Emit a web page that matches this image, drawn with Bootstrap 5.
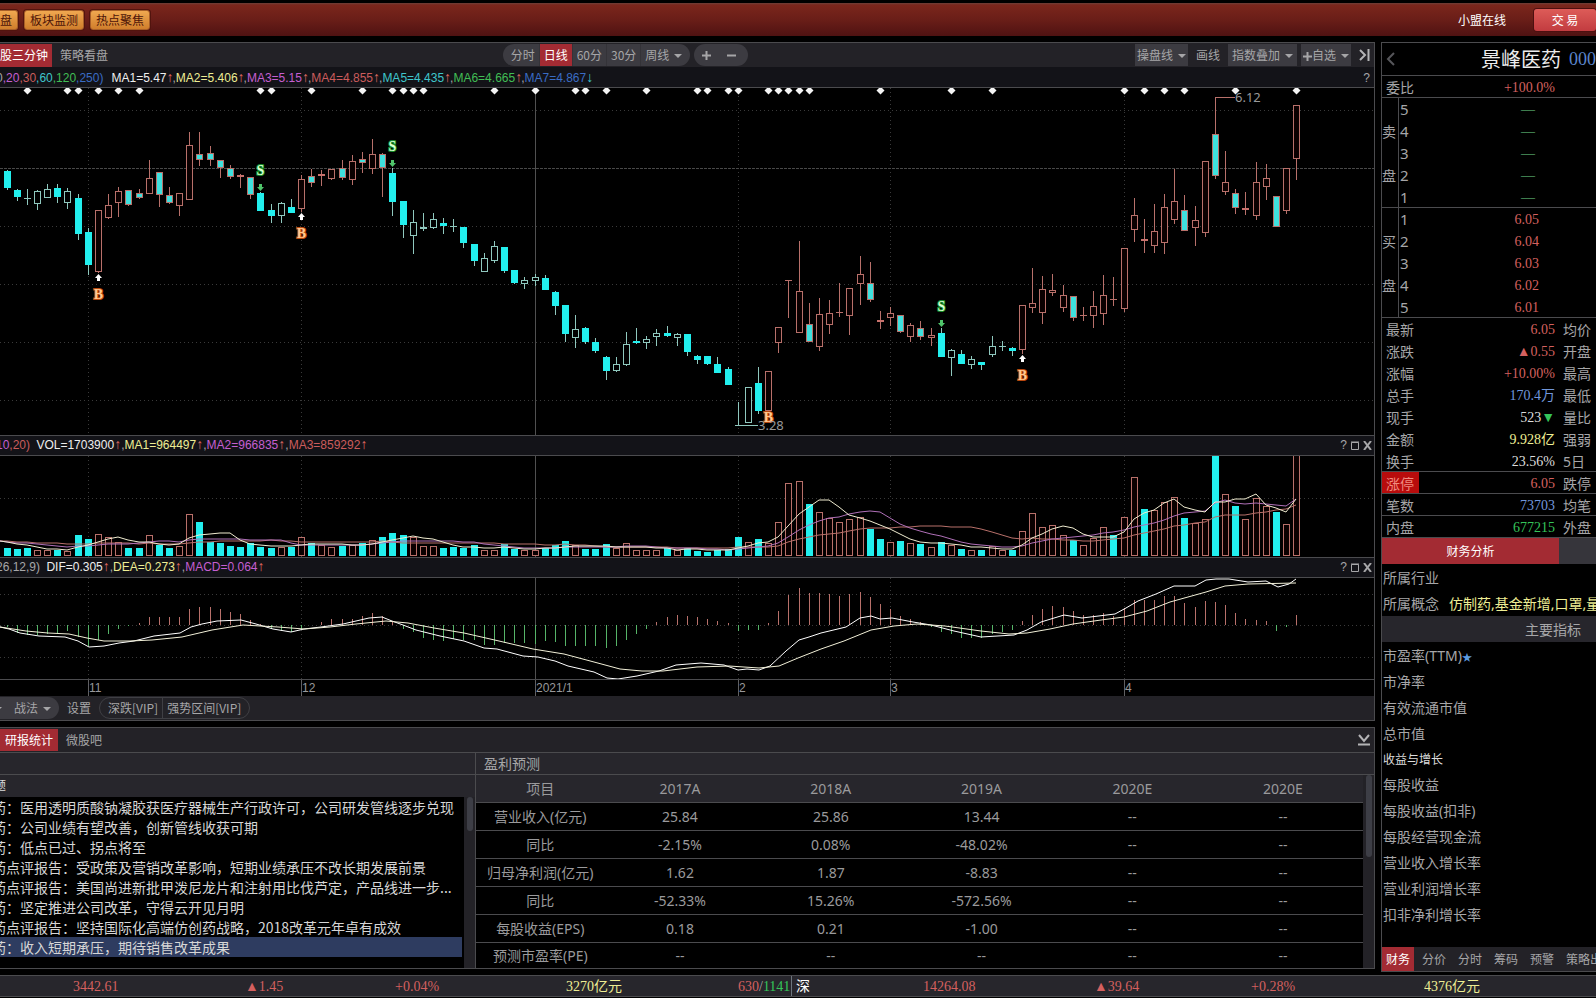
<!DOCTYPE html>
<html lang="zh-CN">
<head>
<meta charset="utf-8">
<meta name="viewport" content="width=device-width, initial-scale=1">
<title>景峰医药 - 日线</title>
<link href="https://cdn.jsdelivr.net/npm/bootstrap@5.3.0/dist/css/bootstrap.min.css" rel="stylesheet">
<style>
:root{--line:#4b4b4e;--panel:#232227;--panel2:#27262c;--strip:#131318;--tabred:#a32b33;--txt:#a6a6a8;--up:#d4605f;--dn:#35c45a;--blue:#7197dc;--yel:#eeee94}
body{background:#000;color:var(--txt);font:12px/20px "Noto Sans","Noto Sans CJK SC",sans-serif;overflow-x:hidden}
button{font:inherit;color:inherit;border:0;background:none;padding:0;white-space:nowrap}
table{border-collapse:separate;border-spacing:0}
th{font-weight:400}
.cjk{font-family:"Noto Sans CJK SC",sans-serif}
.topbar{height:36px;border-top:3px solid #000;background:linear-gradient(#6e4038 0,#7b261c 2px,#6a1e18 50%,#4f1212)}
.quick{gap:6px}
.btn-gold{height:20px;padding:0 5px;border-radius:3px;border:1px solid #a85f28;background:linear-gradient(#f0a850,#d07e2c);color:#4e1508;line-height:18px;box-shadow:0 0 0 1px #52140e}
.btn-trade{width:62px;height:22px;border-radius:3px;background:linear-gradient(#dd5c58,#c23c40);color:#fff;box-shadow:0 0 0 1px #4c1010}
.work{margin-top:6px}
.left-side{min-width:0;margin:0 6px 3px 0}
.panel-box{border:1px solid var(--line);border-left:0}
.tools{background:var(--panel);height:24px}
.tab-on{background:var(--tabred);color:#fff}
.pill{background:#3c3b41;border-radius:11px;height:22px;overflow:hidden}
.pill button{height:22px}
.pill button+button{border-left:1px solid #343338}
.boxbtn{background:#3c3b41;height:22px;padding:0 2px}
.dropdown-toggle::after{border-width:4px;border-bottom:0;vertical-align:2px;margin-left:5px}
.strip{background:var(--strip);height:21px;border-bottom:1px solid var(--line);font:12px/19px "Liberation Sans",sans-serif;white-space:pre;padding-right:4px}
.strip.first{line-height:22px}
.strip.mid{border-top:1px solid var(--line);padding-right:2px}
.strip>span:first-child{margin-left:-4px}
.c-w{color:#eee}.c-y{color:var(--yel)}.c-m{color:#c55fd0}.c-r{color:#cb5c5c}.c-c{color:#3fc6cc}.c-g{color:#41be55}.c-b{color:#3a6cc4}.c-u{color:#e06c62}
.arr{font-weight:700;font-size:14px;line-height:1px;margin-right:-1px}
.strip.mid .arr{margin-right:0}
.up{color:var(--up)}.dn{color:var(--dn)}.blue{color:var(--blue)}.yel{color:var(--yel)}.lt{color:#dcdcdc}
svg{display:block}
.pane{width:100%;overflow:hidden}
.axis{border-top:1px solid var(--line)}
.axis text{font:12px "Liberation Sans",sans-serif;fill:#98989a}
.lvl{font:13px "Noto Sans",sans-serif;fill:#98989a}
.sig{font:bold 14px "Liberation Serif",serif;text-anchor:middle;paint-order:stroke;stroke-width:2px}
.sig-s{fill:#d9ffd0;stroke:#168a2a}
.sig-b{fill:#ffc890;stroke:#b8480e}
.footbar{height:24px;background:var(--panel)}
.half{background:#3c3b41;border-radius:0 11px 11px 0;height:22px}
.half button:first-child{margin-left:-6px}
.ring{border:1px solid #3f3f44;border-radius:11px;height:22px;line-height:18px}
.ring button+button{border-left:1px solid #3f3f44}
.headline{background:var(--panel2);height:22px}
.ruled{border-bottom:1px solid var(--line)}
.news{flex:0 0 475px;min-width:0}
.news-list{font-size:14px;list-style:none;margin:0;padding:0 0 11px;width:462px}
.news-list a{display:block;height:20px;color:#d6d6d6;text-decoration:none;text-indent:-8px;white-space:nowrap;overflow:hidden}
.news-list .picked a{background:#2e3c60}
.track{width:11px;background:var(--panel)}
.thumb{width:6px;border-radius:3px;background:#3d3e46}
.forecast{border-left:1px solid var(--line);min-width:0}
.fc{table-layout:fixed;width:100%;font-size:14px;text-align:center;color:#9a9a9c}
.fc th,.fc td{height:28px;padding:0;border-bottom:1px solid var(--line);line-height:20px;white-space:nowrap}
.fc tr>:last-child{padding-right:5px}
.fc thead th{background:var(--panel2)}
.fc tbody tr:last-child>*{height:25px;border-bottom:0}
.quote{flex:0 0 215px;border-top:1px solid var(--line);border-left:1px solid var(--line);border-bottom:1px solid var(--line);overflow:hidden;font-size:14px;white-space:nowrap}
.stock{height:33px;padding-left:99px;font-size:20px;line-height:32px;color:#ececec}
.num{font-family:"Liberation Serif","Noto Sans CJK SC",serif;font-size:14px}
.code{font-family:"Liberation Serif",serif;font-size:18px;color:#5c86cc}
.quote table{width:100%;table-layout:fixed;line-height:18px}
.quote td,.quote th{height:22px;padding:0;overflow:hidden}
.depth tr:last-child>*{border-bottom:1px solid var(--line)}
.depth th{border-right:1px solid var(--line)}
.quote .depth th,.quote td.num{padding-top:2px}
.quote .depth .lv{font-size:15px;padding-left:1px}
.quote .depth .price{text-align:right;padding-right:57px}
.quote .depth .dn{padding-right:61px;color:#6fd38a}
.quote .kv .val{text-align:right;padding-right:4px}
.quote .kv th{padding-top:2px}
.quote .kv th:first-child{padding-left:4px}
.quote .kv th:last-child{padding-left:4px}
.kv tr.cut>*{border-bottom:1px solid var(--line)}
.kv th.limit{background:#b80c0c;color:#f08c80}
.fin{height:26px;line-height:26px;padding:1px 0 0 1px;flex-shrink:0}
.fin.sub{font-size:12px;height:25px}
.fin.mid{background:var(--panel2);padding-left:143px}
.seg{height:26px;font-size:12px;background:#36353b}
.seg button{width:177px}
.side-tabs{font-size:12px;background:var(--panel)}
.side-tabs button{height:24px}
.status{height:22px;margin-top:3px;background:var(--panel2);border-top:1px solid var(--line);border-bottom:1px solid var(--line);display:grid;grid-template-columns:172fr 150fr 171fr 172fr 53fr 132fr 171fr 157fr 173fr 172fr;padding-left:73px;line-height:21px;white-space:nowrap}
.status>*{min-width:0;overflow:hidden}
</style>
</head>
<body>
<header class="topbar d-flex align-items-center cjk">
  <nav class="d-flex quick flex-grow-1">
    <button class="btn-gold ps-0 rounded-start-0 border-start-0">盘</button>
    <button class="btn-gold">板块监测</button>
    <button class="btn-gold">热点聚焦</button>
  </nav>
  <a href="#" class="text-white text-decoration-none me-4">小盟在线</a>
  <button class="btn-trade ms-1">交 易</button>
</header>

<div class="d-flex work">
<main class="left-side flex-grow-1 d-flex flex-column">
  <section class="panel-box">
    <div class="tools d-flex align-items-center justify-content-between cjk">
      <div class="d-flex align-items-center pe-2">
        <button class="tab-on pe-1" style="height:23px">股三分钟</button>
        <button class="ms-2">策略看盘</button>
      </div>
      <div class="d-flex gap-1 align-items-center">
        <div class="pill d-flex">
          <button class="ps-2 pe-1">分时</button>
          <button class="tab-on px-1">日线</button>
          <button class="px-1">60分</button>
          <button class="px-1">30分</button>
          <button class="ps-1 pe-2 dropdown-toggle">周线</button>
        </div>
        <div class="pill d-flex px-1 gap-1 align-items-center">
          <button class="px-1" aria-label="放大"><svg width="9" height="9"><path d="M4.5 0v9M0 4.5h9" stroke="#a6a6a8" stroke-width="2"/></svg></button>
          <button class="px-2 border-0" aria-label="缩小"><svg width="9" height="9"><path d="M0 4.5h9" stroke="#a6a6a8" stroke-width="2"/></svg></button>
        </div>
      </div>
      <div class="d-flex align-items-center gap-1">
        <button class="boxbtn dropdown-toggle">操盘线</button>
        <button class="px-1">画线</button>
        <button class="boxbtn px-1 dropdown-toggle">指数叠加</button>
        <button class="boxbtn dropdown-toggle"><svg class="d-inline" width="9" height="9"><path d="M4.5 0v9M0 4.5h9" stroke="#a6a6a8" stroke-width="2"/></svg>自选</button>
        <button class="px-1" aria-label="展开"><svg width="11" height="12"><path d="M1 1l5 5-5 5M9.500 0v12" fill="none" stroke="#b4b4b6" stroke-width="2"/></svg></button>
      </div>
    </div>
    <div class="strip first d-flex justify-content-between"><span>0<span class="c-m">,20</span><span class="c-r">,30</span><span class="c-c">,60</span><span class="c-g">,120</span><span class="c-b">,250)</span><span class="ms-2 c-w">MA1=5.47</span><span class="arr c-u">↑</span>,<span class="c-y">MA2=5.406</span><span class="arr c-u">↑</span>,<span class="c-m">MA3=5.15</span><span class="arr c-u">↑</span>,<span class="c-r">MA4=4.855</span><span class="arr c-u">↑</span>,<span class="c-c">MA5=4.435</span><span class="arr c-u">↑</span>,<span class="c-g">MA6=4.665</span><span class="arr c-u">↑</span>,<span class="c-b">MA7=4.867</span><span class="arr c-c">↓</span></span><button>?</button></div>
    <svg class="pane" id="k" height="347"></svg>
    <div class="strip mid d-flex justify-content-between"><span><span class="c-m">10</span><span class="c-r">,20)</span> <span class="c-w" style="margin-left:3px">VOL=1703900</span><span class="arr c-u">↑</span>,<span class="c-y">MA1=964497</span><span class="arr c-u">↑</span>,<span class="c-m">MA2=966835</span><span class="arr c-u">↑</span>,<span class="c-r">MA3=859292</span><span class="arr c-u">↑</span></span><span class="d-flex gap-1 align-items-center"><button>?</button><button aria-label="最大化"><svg width="8" height="9"><path d="M.5 1.500h7v7h-7zM0 1h8" fill="none" stroke="#a6a6a8"/></svg></button><button aria-label="关闭"><svg width="9" height="9"><path d="M1 0l7 9M8 0l-7 9" stroke="#a6a6a8" stroke-width="2"/></svg></button></span></div>
    <svg class="pane" id="v" height="101"></svg>
    <div class="strip mid d-flex justify-content-between"><span>26,12,9) <span class="c-w" style="margin-left:3px">DIF=0.305</span><span class="arr c-u">↑</span>,<span class="c-y">DEA=0.273</span><span class="arr c-u">↑</span>,<span class="c-m">MACD=0.064</span><span class="arr c-u">↑</span></span><span class="d-flex gap-1 align-items-center"><button>?</button><button aria-label="最大化"><svg width="8" height="9"><path d="M.5 1.500h7v7h-7zM0 1h8" fill="none" stroke="#a6a6a8"/></svg></button><button aria-label="关闭"><svg width="9" height="9"><path d="M1 0l7 9M8 0l-7 9" stroke="#a6a6a8" stroke-width="2"/></svg></button></span></div>
    <svg class="pane" id="m" height="101"></svg>
    <svg class="pane axis" id="a" height="17"></svg>
    <div class="footbar d-flex align-items-center cjk">
      <div class="half d-flex align-items-center pe-2"><button class="dropdown-toggle" aria-label="更多"></button><button class="ms-2 ps-1 dropdown-toggle">战法</button></div>
      <button class="mx-2">设置</button>
      <div class="ring d-flex px-2"><button class="pe-1">深跌[VIP]</button><button class="ps-1">强势区间[VIP]</button></div>
    </div>
  </section>

  <section class="panel-box work">
    <div class="tools ruled d-flex align-items-center cjk" style="height:25px">
      <button class="tab-on px-1" style="height:22px;width:58px">研报统计</button>
      <button class="ms-2">微股吧</button>
      <button class="ms-auto me-1" aria-label="收起"><svg width="12" height="12"><path d="M1 1l5 6 5-6M0 10.500h12" fill="none" stroke="#b4b4b6" stroke-width="2"/></svg></button>
    </div>
    <div class="d-flex">
      <div class="news">
        <div class="headline ruled"></div>
        <div class="headline cjk lt" style="text-indent:-6px">题</div>
        <div class="d-flex justify-content-between">
          <ul class="news-list cjk">
            <li><a href="#">药：医用透明质酸钠凝胶获医疗器械生产行政许可，公司研发管线逐步兑现</a></li>
            <li><a href="#">药：公司业绩有望改善，创新管线收获可期</a></li>
            <li><a href="#">药：低点已过、拐点将至</a></li>
            <li><a href="#">药点评报告：受政策及营销改革影响，短期业绩承压不改长期发展前景</a></li>
            <li><a href="#">药点评报告：美国尚进新批甲泼尼龙片和注射用比伐芦定，产品线进一步...</a></li>
            <li><a href="#">药：坚定推进公司改革，守得云开见月明</a></li>
            <li><a href="#">药点评报告：坚持国际化高端仿创药战略，2018改革元年卓有成效</a></li>
            <li class="picked"><a href="#">药：收入短期承压，期待销售改革成果</a></li>
          </ul>
          <div class="track"><div class="thumb mx-auto" style="height:34px"></div></div>
        </div>
      </div>
      <div class="forecast flex-grow-1">
        <div class="headline ruled ps-2 cjk" style="font-size:14px">盈利预测</div>
        <div class="d-flex">
          <table class="fc">
            <colgroup><col style="width:14.500%"><col><col><col><col><col style="width:17.500%"></colgroup>
            <thead><tr><th>项目</th><th>2017A</th><th>2018A</th><th>2019A</th><th>2020E</th><th>2020E</th></tr></thead>
            <tbody>
              <tr><th>营业收入(亿元)</th><td>25.84</td><td>25.86</td><td>13.44</td><td>--</td><td>--</td></tr>
              <tr><th>同比</th><td>-2.15%</td><td>0.08%</td><td>-48.02%</td><td>--</td><td>--</td></tr>
              <tr><th>归母净利润(亿元)</th><td>1.62</td><td>1.87</td><td>-8.83</td><td>--</td><td>--</td></tr>
              <tr><th>同比</th><td>-52.33%</td><td>15.26%</td><td>-572.56%</td><td>--</td><td>--</td></tr>
              <tr><th>每股收益(EPS)</th><td>0.18</td><td>0.21</td><td>-1.00</td><td>--</td><td>--</td></tr>
              <tr><th>预测市盈率(PE)</th><td>--</td><td>--</td><td>--</td><td>--</td><td>--</td></tr>
            </tbody>
          </table>
          <div class="track flex-shrink-0"><div class="thumb mx-auto" style="height:82px"></div></div>
        </div>
      </div>
    </div>
  </section>
</main>

<aside class="quote d-flex flex-column">
  <div class="stock ruled d-flex position-relative cjk">
    <button class="position-absolute start-0 top-0 ms-1 mt-2" aria-label="上一只"><svg width="9" height="16"><path d="M8 2L2 8l6 6" fill="none" stroke="#56565a" stroke-width="2"/></svg></button>
    <span>景峰医药</span><span class="code ms-2">000</span>
  </div>
  <table class="kv"><colgroup><col style="width:37px"><col style="width:140px"><col></colgroup>
    <tr class="cut"><th>委比</th><td class="val num up">+100.0%</td><td></td></tr></table>
  <table class="depth" id="ask"></table>
  <table class="depth" id="bid"></table>
  <table class="kv"><colgroup><col style="width:37px"><col style="width:140px"><col></colgroup>
    <tr><th>最新</th><td class="val num up">6.05</td><th>均价</th></tr>
    <tr><th>涨跌</th><td class="val num up">▲0.55</td><th>开盘</th></tr>
    <tr><th>涨幅</th><td class="val num up">+10.00%</td><th>最高</th></tr>
    <tr><th>总手</th><td class="val num blue">170.4万</td><th>最低</th></tr>
    <tr><th>现手</th><td class="val num lt">523<span class="dn">▼</span></td><th>量比</th></tr>
    <tr><th>金额</th><td class="val num yel">9.928亿</td><th>强弱</th></tr>
    <tr class="cut"><th>换手</th><td class="val num lt">23.56%</td><th>5日</th></tr>
    <tr class="cut"><th class="limit">涨停</th><td class="val num up">6.05</td><th>跌停</th></tr>
    <tr class="cut"><th>笔数</th><td class="val num blue">73703</td><th>均笔</th></tr>
    <tr class="cut"><th>内盘</th><td class="val num dn">677215</td><th>外盘</th></tr>
  </table>
  <div class="seg d-flex cjk"><button class="tab-on">财务分析</button></div>
  <div class="fin">所属行业</div>
  <div class="fin">所属概念<span class="yel" style="margin-left:10px">仿制药,基金新增,口罩,量</span></div>
  <div class="fin mid">主要指标</div>
  <div class="fin">市盈率(TTM)<span style="color:#5d9be0;font-size:10px">★</span></div>
  <div class="fin">市净率</div><div class="fin">有效流通市值</div><div class="fin">总市值</div>
  <div class="fin sub lt">收益与增长</div>
  <div class="fin">每股收益</div><div class="fin">每股收益(扣非)</div><div class="fin">每股经营现金流</div>
  <div class="fin">营业收入增长率</div><div class="fin">营业利润增长率</div><div class="fin">扣非净利增长率</div>
  <nav class="side-tabs d-flex cjk mt-auto gap-1">
    <button class="tab-on px-1" style="width:34px">财务</button><button class="px-1">分价</button><button class="px-1">分时</button><button class="px-1">筹码</button><button class="px-1">预警</button><button class="px-1">策略出</button>
  </nav>
</aside>
</div>

<footer class="status num">
  <span class="up">3442.61</span><span class="up">▲1.45</span><span class="up">+0.04%</span><span class="yel">3270亿元</span>
  <span><span class="up">630</span>/<span class="dn">1141</span></span><span class="text-white border-start border-secondary ps-1">深</span>
  <span class="up">14264.08</span><span class="up">▲39.64</span><span class="up">+0.28%</span><span class="yel">4376亿元</span>
</footer>

<script src="https://cdn.jsdelivr.net/npm/bootstrap@5.3.0/dist/js/bootstrap.bundle.min.js"></script>
<script>
// order book
const cols='<colgroup><col style="width:17px"><col style="width:20px"><col></colgroup>';
const book=(id,rows)=>document.getElementById(id).innerHTML=cols+rows.map(r=>
  `<tr><th>${r[0]}</th><td class="lv">${r[1]}</td><td class="price num ${r[3]}">${r[2]}</td></tr>`).join('');
book('ask',[['',5],['卖',4],['',3],['盘',2],['',1]].map(r=>[...r,'—','dn']));
book('bid',[['',1,'6.05'],['买',2,'6.04'],['',3,'6.03'],['盘',4,'6.02'],['',5,'6.01']].map(r=>[...r,'up']));

// candles: kind, high, body top, body bottom, low
// s solid cyan, h hollow cyan, f cyan with red edge, r hollow red, t thick red cross
const bars=`s170,171,188,190 s189,190,197,201 h189,198,198,205 h190,191,204,210 h184,189,198,198 s184,188,197,203 h188,191,203,209 s194,198,234,240
s228,232,265,275 r210,210,272,273 r194,205,218,219 r187,191,203,217 f190,190,205,206 f189,193,198,199 r160,178,194,194 f172,172,195,207
f187,195,203,204 r193,193,206,216 r132,145,200,200 f132,154,160,166 f146,153,160,166 f160,160,168,178 f165,168,177,179 t174,175,176,188
f177,177,195,199 s192,193,211,211 s204,210,216,223 h202,203,216,223 s199,207,213,213 r175,179,209,212 f169,176,183,187 t170,174,175,186
r169,169,179,180 f160,168,178,180 r155,161,180,185 f152,159,163,173 r139,154,169,174 f153,154,168,197 s168,173,202,216 s201,201,225,238
h210,222,236,254 h213,227,229,231 h213,219,228,229 s218,223,226,234 h219,226,226,232 s227,227,243,248 s244,244,261,266 h253,258,272,272
h241,246,261,263 s247,247,271,273 s270,270,283,284 h277,280,284,289 h274,277,281,286 s275,278,290,290 s291,292,306,315 s305,305,334,342
h315,329,338,348 s327,328,342,344 s338,342,351,353 s356,357,371,380 h357,364,371,372 h332,344,365,366 s328,341,343,344 h336,339,343,349
h329,333,337,346 s326,333,336,337 h333,334,338,346 s334,334,352,356 s355,356,360,364 s356,356,364,365 s357,364,373,373 s367,369,385,385
h402,425,425,425 h387,387,423,423 s367,383,411,414 r371,371,411,411 r327,327,343,353 r280,280,280,318 r241,291,333,333 f303,324,342,342
r298,314,347,351 r300,313,325,334 r283,312,312,317 r288,288,316,335 r256,274,284,305 f262,283,300,302 t311,320,321,329 r307,313,318,326
f315,315,332,333 r323,325,337,342 f321,328,337,340 r328,335,338,346 s328,333,357,357 h349,350,358,376 s350,354,364,364 h356,359,365,369
s362,362,365,370 h336,346,355,357 h341,346,346,351 s347,348,351,356 r305,305,350,354 r268,303,308,313 r276,289,313,324 r274,290,293,296
r285,295,308,312 f296,296,318,321 r307,315,315,321 r291,306,316,328 r275,295,314,325 r277,299,299,306 r248,248,309,312 r198,215,230,242
t219,239,240,253 r204,231,246,253 r194,207,243,254 r169,201,220,224 f195,210,231,231 r206,220,228,246 r161,161,233,237 f97,134,176,179
r151,182,192,195 f189,193,208,214 t192,208,209,215 r162,182,216,220 r164,178,187,200 f196,196,227,227 r168,168,211,214 r105,105,159,180`
 .split(/\s+/).map(b=>[b[0],...b.slice(1).split(',').map(Number)]);
// volume bar heights; negative marks a falling day
const vol=[-8,-7,-8,6,6,-6,5,-21,-17,22,19,14,-8,-8,21,-11,-8,10,42,-34,-14,-13,-10,-9,-13,-9,-8,9,-9,19,-13,11,9,-10,11,-13,16,-19,-23,-21,19,10,10,-8,-9,-8,-11,6,6,-12,-7,6,6,-8,-11,-15,11,-7,-7,-12,8,13,6,6,6,-8,6,-8,-5,-4,-6,-7,-19,14,-17,13,34,73,75,-52,44,38,34,37,39,-27,-17,14,-15,13,-12,9,-14,11,-7,6,-6,10,6,-6,25,43,29,31,21,-16,11,18,29,-21,39,79,-47,46,54,59,-38,33,37,-101,62,-50,37,58,50,-44,32,101];
const macd=[-2,-8,-10,-10,-9,-9,-6,-12,-21,-15,-9,-4,-1,2,8,8,8,8,16,18,18,16,13,11,5,1,-4,-6,-7,-4,0,3,6,6,6,9,12,9,4,-4,-7,-13,-15,-16,-14,-15,-15,-20,-20,-18,-18,-18,-19,-16,-17,-21,-21,-21,-21,-23,-21,-15,-9,-4,3,8,10,9,8,6,4,2,-6,-5,-5,2,14,30,37,32,32,31,29,31,33,28,21,16,9,6,3,-2,-7,-9,-13,-13,-13,-9,-7,-5,4,10,16,19,18,14,10,10,12,9,17,25,25,25,29,29,22,18,24,23,20,12,6,5,4,-6,-2,10];
const X=i=>Math.floor(7+10.155*i), R='#b8706a', C='#22efee', P='#8fc8be';
const ln=(x1,y1,x2,y2,c,d='')=>`<line x1="${x1}" y1="${y1}" x2="${x2}" y2="${y2}" stroke="${c}" ${d?`stroke-dasharray="${d}"`:''}/>`;
const months=[[88,'11'],[301,'12'],[535,'2021/1'],[738,'2'],[890,'3'],[1124,'4']];
const grid=(ys,y0,y1)=>ys.map(y=>ln(0,y+.5,'100%',y+.5,'#3a3a3a','1 3')).join('')+
  months.map(m=>ln(m[0]+.5,y0,m[0]+.5,y1,m[0]==535?'#505050':'#3a3a3a',m[0]==535?'':'1 3')).join('');
const draw=(id,top,s)=>document.getElementById(id).innerHTML=`<g transform="translate(0,${-top})">${s}</g>`;

let s=grid([110,226,284,342,400],88,435)+ln(0,168.5,'100%',168.5,'#484848','3 1');
bars.forEach(([k,hi,t,b,lo],i)=>{
  const x=X(i), m=x+.5, hot='frt'.includes(k), w=hot?R:P;
  if(hi<t) s+=ln(m,hi,m,t,w);
  if(lo>b) s+=ln(m,b,m,lo,w);
  if(k=='t') s+=`<rect x="${x-3}" y="${t}" width="7" height="2" fill="#c8716c"/>`;
  else if(t==b) s+=ln(x-3,t+.5,x+4,t+.5,w);
  else if(k=='s') s+=`<rect x="${x-3}" y="${t}" width="7" height="${b-t}" fill="${C}"/>`;
  else s+=`<rect x="${x-2.5}" y="${t+.5}" width="6" height="${b-t-1}" fill="${k=='f'?'#3fe0dd':k=='r'?'#0a0000':'#000'}" stroke="${w}"/>`;
});
[2,6,7,9,11,13,25,26,30,35,38,39,40,41,48,52,56,57,59,63,68,69,71,72,75,76,77,78,79,86,93,97,110,112,114,116,121,127]
  .forEach(i=>{const x=X(i)+.5;s+=`<path d="M${x} 86.500l4 4-4 4-4-4z" fill="#f4f4f4"/>`});
[[25,170],[38,146],[92,306]].forEach(([i,y])=>{const x=X(i)+.5;
  s+=`<text class="sig sig-s" x="${x}" y="${y+5}">S</text><path d="M${x-1.5} ${y+14}h3v3h2l-3.500 4-3.500-4h2z" fill="#4fc46a"/>`});
[[9,294],[29,233],[75,417],[100,375]].forEach(([i,y])=>{const x=X(i)+.5;
  s+=`<text class="sig sig-b" x="${x}" y="${y+5}">B</text>`+(i==75?'':`<path d="M${x-1.5} ${y-13}h3v-3h2l-3.500-4-3.500 4h2z" fill="#fff"/>`)});
s+=ln(1216,97.5,1235,97.5,R)+`<text class="lvl" x="1235" y="102">6.12</text>`+ln(735,425.5,758,425.5,P)+`<text class="lvl" x="758" y="430">3.28</text>`;
draw('k',88,s);

s=grid([498],456,557);
vol.forEach((v,i)=>{const x=X(i),h=Math.abs(v);
  s+=v<0?`<rect x="${x-3}" y="${556-h}" width="7" height="${h}" fill="${C}"/>`:`<rect x="${x-2.5}" y="${556.5-h}" width="6" height="${h-1}" fill="#0a0000" stroke="${R}"/>`});
const hist=Array(20).fill(15).concat(vol.map(Math.abs));
[[20,'#b8706a'],[10,'#b070b8'],[5,'#f0ecd0']].forEach(([n,c])=>{
  const p=vol.map((_,i)=>X(i)+','+(556-hist.slice(i+21-n,i+21).reduce((a,b)=>a+b)/n).toFixed(0));
  s+=`<polyline points="0,541 ${p.join(' ')}" fill="none" stroke="${c}"/>`});
draw('v',456,s);

s=grid([594,625,657],578,679);
macd.forEach((v,i)=>{if(v) s+=ln(X(i)+.5,625,X(i)+.5,625-v,v>0?R:'#56b468')});
s+=`<polyline fill="none" stroke="#fff" points="0,627 9,629 20,633 39,636 65,637 78,641 89,647 104,646 119,643 134,641 154,636 180,633 191,627 202,624 217,621 241,620 256,624 273,629 291,632 304,629 321,627 343,624 369,618 382,617 392,621 403,625 416,630 440,636 464,641 484,648 497,649 523,656 538,657 555,661 568,666 594,672 607,678 618,679 637,676 659,671 676,665 701,663 724,665 738,670 747,669 759,670 770,666 786,651 799,640 809,637 821,633 846,627 860,618 871,616 880,619 892,618 913,622 931,625 954,631 981,637 1014,635 1027,630 1041,622 1064,615 1082,618 1115,614 1126,608 1138,601 1156,594 1174,586 1195,586 1206,580 1216,579 1229,579 1248,582 1266,581 1278,587 1289,584 1296,579"/>
<polyline fill="none" stroke="#f2f0d8" points="0,627 26,631 48,633 69,634 87,638 104,641 130,641 152,640 182,637 212,630 243,625 278,627 304,629 330,627 356,624 386,621 408,623 434,628 464,633 499,641 533,649 564,654 594,662 620,669 642,671 663,671 697,667 729,666 759,668 779,666 798,658 821,649 844,641 871,630 894,626 917,624 945,626 981,631 1009,634 1027,633 1050,629 1073,624 1101,620 1124,617 1147,611 1170,602 1206,592 1225,586 1248,584 1296,583"/>`;
draw('m',578,s);
draw('a',0,months.map(m=>ln(m[0]+.5,0,m[0]+.5,17,'#606062')+`<text x="${m[0]+1}" y="12">${m[1]}</text>`).join(''));
</script>
</body>
</html>
